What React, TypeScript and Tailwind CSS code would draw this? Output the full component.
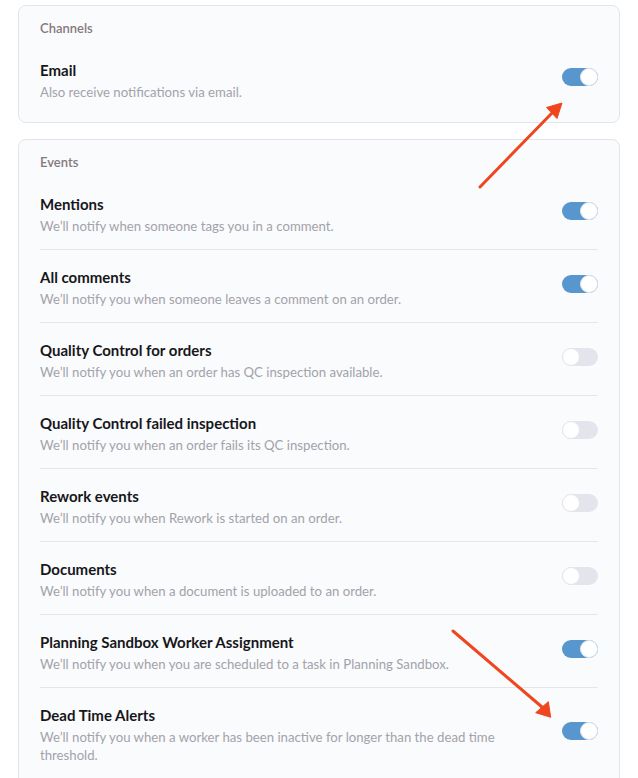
import { useState } from 'react';

type Item = { id: string; title: string; desc: string; on: boolean };

const events: Item[] = [
  { id: 'mentions', title: 'Mentions', desc: 'We’ll notify when someone tags you in a comment.', on: true },
  { id: 'comments', title: 'All comments', desc: 'We’ll notify you when someone leaves a comment on an order.', on: true },
  { id: 'qc', title: 'Quality Control for orders', desc: 'We’ll notify you when an order has QC inspection available.', on: false },
  { id: 'qcfail', title: 'Quality Control failed inspection', desc: 'We’ll notify you when an order fails its QC inspection.', on: false },
  { id: 'rework', title: 'Rework events', desc: 'We’ll notify you when Rework is started on an order.', on: false },
  { id: 'docs', title: 'Documents', desc: 'We’ll notify you when a document is uploaded to an order.', on: false },
  { id: 'sandbox', title: 'Planning Sandbox Worker Assignment', desc: 'We’ll notify you when you are scheduled to a task in Planning Sandbox.', on: true },
  {
    id: 'dead',
    title: 'Dead Time Alerts',
    desc: 'We’ll notify you when a worker has been inactive for longer than the dead time threshold.',
    on: true
  }
];

function Toggle({ on, onChange }: { on: boolean; onChange: () => void }) {
  return (
    <button
      type="button"
      onClick={onChange}
      className={`mb-2 flex h-[18px] w-9 shrink-0 items-center rounded-full ${on ? 'justify-end bg-[#5897cd]' : 'justify-start bg-[#e4e4ec]'}`}
    >
      <span className="h-[18px] w-[18px] rounded-full border border-[#e3e6ee] bg-white" />
    </button>
  );
}

function Row({ item, last, onToggle }: { item: Item; last?: boolean; onToggle: () => void }) {
  return (
    <div className={`flex items-center justify-between pt-[17px] pb-[14px] ${last ? '' : 'border-b border-[#e5e6ea]'}`}>
      <div className="max-w-[480px]">
        <p className="text-[15px] leading-5 font-bold text-[#17171b]">{item.title}</p>
        <p className="mt-[3px] text-[13.2px] leading-[18px] text-[#a3a2ab]">{item.desc}</p>
      </div>
      <Toggle on={item.on} onChange={onToggle} />
    </div>
  );
}

function Card({ label, children }: { label: string; children: React.ReactNode }) {
  return (
    <section className="rounded-lg border border-[#e3e5ea] bg-[#fafbfc] px-[21px] pt-[14px] pb-[7px]">
      <h2 className="mb-[7px] text-[13px] leading-4 font-semibold text-[#85797f]">{label}</h2>
      {children}
    </section>
  );
}

export default function App() {
  const [email, setEmail] = useState(true);
  const [items, setItems] = useState(events);

  return (
    <div className="relative min-h-[778px] bg-white px-[18px] pt-[5px] font-['Lato',sans-serif]">
      <div className="flex flex-col gap-4">
        <Card label="Channels">
          <Row
            item={{ id: 'email', title: 'Email', desc: 'Also receive notifications via email.', on: email }}
            last
            onToggle={() => setEmail(!email)}
          />
        </Card>
        <Card label="Events">
          {items.map((item, i) => (
            <Row
              key={item.id}
              item={item}
              last={i === items.length - 1}
              onToggle={() => setItems(items.map((x) => (x.id === item.id ? { ...x, on: !x.on } : x)))}
            />
          ))}
        </Card>
      </div>

      {/* annotation arrows */}
      <svg className="pointer-events-none absolute top-0 left-0" width="638" height="778" viewBox="0 0 638 778">
        <g fill="#f0461f" stroke="#f0461f">
          <line x1="480" y1="187" x2="552" y2="113" strokeWidth="3" strokeLinecap="round" />
          <polygon points="562,103 557,118.5 546.5,107.5" strokeWidth="1" strokeLinejoin="round" />
          <line x1="453" y1="631" x2="542" y2="707" strokeWidth="3" strokeLinecap="round" />
          <polygon points="550.7,717.3 535.7,712.7 548.3,701.7" strokeWidth="1" strokeLinejoin="round" />
        </g>
      </svg>
    </div>
  );
}
